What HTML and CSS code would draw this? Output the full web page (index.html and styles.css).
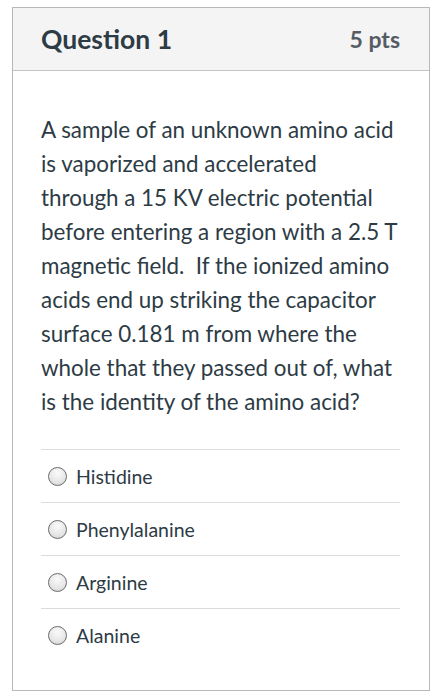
FILE: index.html
```html
<!DOCTYPE html>
<html>
<head>
<meta charset="utf-8">
<link rel="stylesheet" href="styles.css">
</head>
<body>
<div class="card">
  <div class="header">
    <h2 class="title">Question 1</h2>
    <span class="pts">5 pts</span>
  </div>
  <div class="content">
    <p class="question">A sample of an unknown amino acid<br>is vaporized and accelerated<br>through a 15 KV electric potential<br>before entering a region with a 2.5&nbsp;T<br>magnetic field.&nbsp; If the ionized amino<br>acids end up striking the capacitor<br>surface 0.181 m from where the<br>whole that they passed out of, what<br>is the identity of the amino acid?</p>
    <ul class="answers">
      <li class="answer"><span class="radio"></span><span class="label">Histidine</span></li>
      <li class="answer"><span class="radio"></span><span class="label">Phenylalanine</span></li>
      <li class="answer"><span class="radio"></span><span class="label">Arginine</span></li>
      <li class="answer"><span class="radio"></span><span class="label">Alanine</span></li>
    </ul>
  </div>
</div>
</body>
</html>
```

FILE: styles.css
```css
html, body {
  margin: 0;
  padding: 0;
  background: #ffffff;
}
body {
  font-family: Lato, "Open Sans", sans-serif;
  color: #2d3b45;
}
.card {
  margin: 7px 0 0 12px;
  width: 416px;
  border: 1px solid #b8b8b8;
  box-sizing: content-box;
}
.header {
  display: flex;
  align-items: center;
  justify-content: space-between;
  height: 62px;
  padding: 0 29px 0 28px;
  background: #f4f4f4;
  border-bottom: 1px solid #c4c4c4;
}
.title {
  margin: 0;
  font-size: 26.5px;
  font-weight: 700;
  color: #2d3b45;
}
.pts {
  font-size: 23px;
  font-weight: 700;
  color: #555c63;
}
.content {
  padding: 42px 29px 29px 28px;
}
.question {
  margin: 0 0 30px;
  font-size: 22.4px;
  line-height: 34px;
  white-space: nowrap;
  color: #2d3b45;
}
.answers {
  list-style: none;
  margin: 0;
  padding: 0;
}
.answer {
  display: flex;
  align-items: center;
  height: 52px;
  border-top: 1px solid #dcdcdc;
  padding-left: 7px;
}
.radio {
  width: 17px;
  height: 17px;
  border-radius: 50%;
  border: 1px solid #6b6b6b;
  background: radial-gradient(circle at 50% 30%, #fafafa 0%, #e6e6e6 60%, #cfcfcf 100%);
  margin-right: 9px;
  flex: none;
}
.label {
  font-size: 19.5px;
  color: #2d3b45;
}
```
